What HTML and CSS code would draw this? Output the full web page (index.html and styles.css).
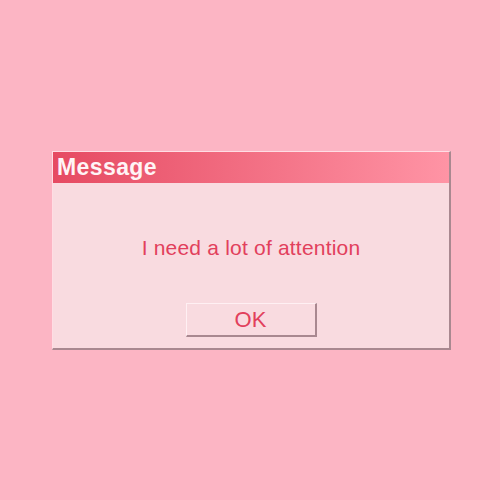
FILE: index.html
```html
<!DOCTYPE html>
<html>
<head>
<meta charset="utf-8">
<link rel="stylesheet" href="styles.css">
</head>
<body>
<div class="dialog">
  <div class="titlebar">Message</div>
  <div class="content">
    <p class="message">I need a lot of attention</p>
    <button class="ok">OK</button>
  </div>
</div>
</body>
</html>
```
FILE: styles.css
```css
html, body {
  margin: 0;
  padding: 0;
}
body {
  width: 500px;
  height: 500px;
  background: #fcb5c4;
  padding: 151px 0 0 52px;
  box-sizing: border-box;
  font-family: "Liberation Sans", Arial, sans-serif;
}
.dialog {
  width: 399px;
  box-sizing: border-box;
  border-top: 1px solid #ffdde4;
  border-left: 1px solid #ffdde4;
  border-right: 2px solid #a98890;
  border-bottom: 2px solid #a98890;
  background: #f9dbe0;
  display: flex;
  flex-direction: column;
}
.titlebar {
  height: 31px;
  line-height: 31px;
  padding-left: 4px;
  background: linear-gradient(to right, #e64a62, #ff94a5);
  color: #fff4f6;
  font-weight: bold;
  font-size: 23px;
  letter-spacing: 0.4px;
}
.content {
  display: flex;
  flex-direction: column;
  align-items: center;
  padding: 53px 0 11px;
}
.message {
  margin: 0;
  font-size: 21px;
  line-height: 24px;
  color: #e2405c;
  letter-spacing: 0.2px;
}
.ok {
  margin-top: 43px;
  width: 131px;
  height: 34px;
  box-sizing: border-box;
  background: #f9dbe0;
  border-top: 1px solid #fff0f3;
  border-left: 1px solid #fff0f3;
  border-right: 2px solid #a98890;
  border-bottom: 2px solid #a98890;
  font-family: "Liberation Sans", Arial, sans-serif;
  font-size: 22px;
  color: #e2405c;
  padding: 0;
  line-height: 30px;
}
```
